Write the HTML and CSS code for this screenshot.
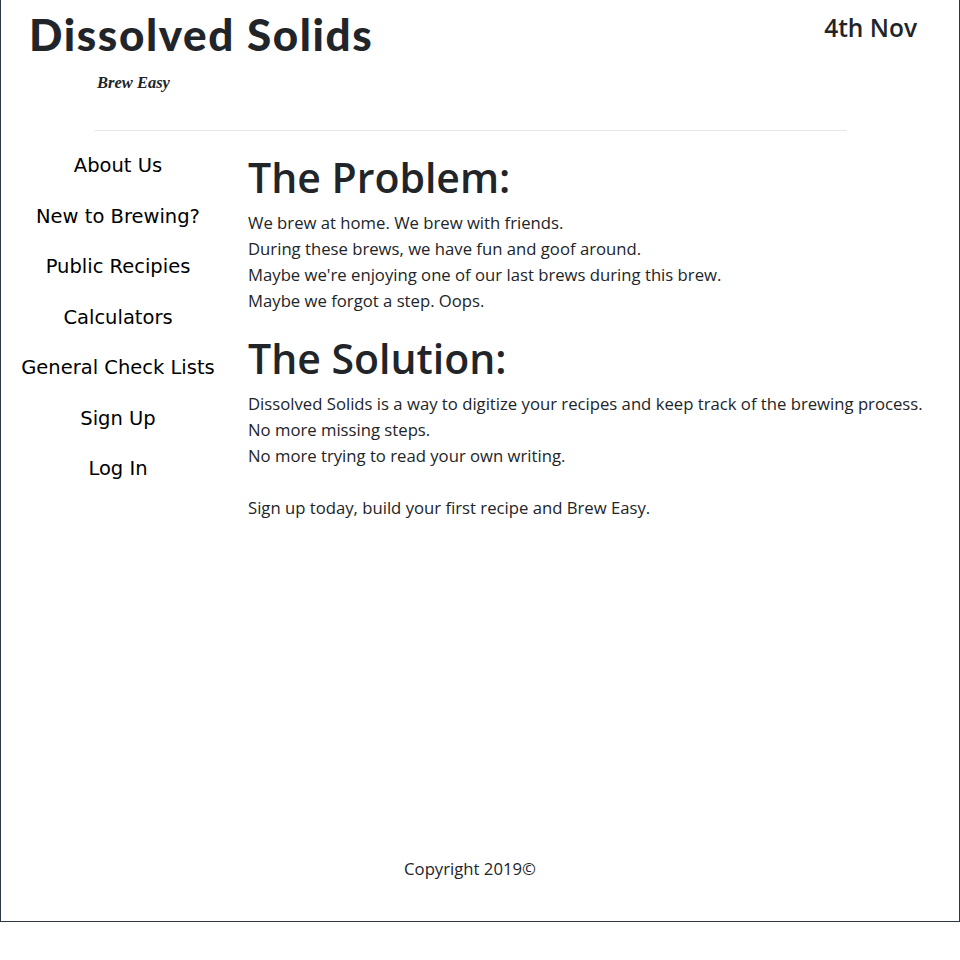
FILE: index.html
```html
<!DOCTYPE html>
<html>
<head>
<meta charset="utf-8">
<link rel="stylesheet" href="styles.css">
</head>
<body>
<div class="page">
  <header class="header">
    <div class="brand">
      <h1 class="title">Dissolved Solids</h1>
      <div class="tagline">Brew Easy</div>
    </div>
    <div class="date">4th Nov</div>
  </header>
  <hr class="rule">
  <div class="body">
    <nav class="nav">
      <a>About Us</a>
      <a>New to Brewing?</a>
      <a>Public Recipies</a>
      <a>Calculators</a>
      <a>General Check Lists</a>
      <a>Sign Up</a>
      <a>Log In</a>
    </nav>
    <main class="main">
      <h2 class="heading">The Problem:</h2>
      <p class="text">We brew at home. We brew with friends.<br>During these brews, we have fun and goof around.<br>Maybe we're enjoying one of our last brews during this brew.<br>Maybe we forgot a step. Oops.</p>
      <h2 class="heading">The Solution:</h2>
      <p class="text">Dissolved Solids is a way to digitize your recipes and keep track of the brewing process.<br>No more missing steps.<br>No more trying to read your own writing.<br><br>Sign up today, build your first recipe and Brew Easy.</p>
    </main>
  </div>
  <footer class="footer">Copyright 2019©</footer>
</div>
</body>
</html>
```

FILE: styles.css
```css
html, body {
  margin: 0;
  padding: 0;
  background: #fff;
}
body {
  font-family: "Open Sans", "Noto Sans", sans-serif;
  color: #212529;
}
.page {
  box-sizing: border-box;
  width: 960px;
  height: 922px;
  border: 1px solid #2d3547;
  border-top: none;
  display: flex;
  flex-direction: column;
}
.header {
  display: flex;
  justify-content: space-between;
  align-items: flex-start;
  padding: 0 42px 0 28px;
}
.title {
  margin: 8px 0 0 0;
  font-family: "Lato", sans-serif;
  font-weight: 900;
  font-size: 44px;
  line-height: 52px;
  letter-spacing: 1.6px;
}
.tagline {
  margin: 13px 0 0 68px;
  font-family: "Liberation Serif", serif;
  font-style: italic;
  font-weight: bold;
  font-size: 16.5px;
  line-height: 20px;
}
.date {
  margin-top: 12px;
  font-family: "Open Sans", sans-serif;
  font-weight: 600;
  font-size: 24.5px;
  line-height: 32px;
  color: #212529;
}
.rule {
  margin: 37px 0 0 94px;
  width: 752px;
  border: 0;
  border-top: 1px solid #e6e6e6;
  height: 0;
}
.body {
  display: flex;
  flex: 1;
}
.nav {
  width: 234px;
  display: flex;
  flex-direction: column;
  align-items: center;
  padding-top: 20px;
  gap: 20.5px;
  font-family: "DejaVu Sans", sans-serif;
  font-size: 19.5px;
  line-height: 30px;
  color: #000;
}
.nav a {
  display: block;
  text-align: center;
  white-space: nowrap;
}
.main {
  padding-left: 13px;
  padding-top: 21px;
}
.heading {
  margin: 0;
  font-family: "Open Sans", sans-serif;
  font-weight: 600;
  font-size: 41px;
  line-height: 50px;
}
.text {
  margin: 8px 0 19px 0;
  font-size: 16.7px;
  line-height: 26px;
}
.footer {
  text-align: center;
  padding: 0 20px 40px 0;
  font-size: 16.7px;
  line-height: 24px;
}
```
